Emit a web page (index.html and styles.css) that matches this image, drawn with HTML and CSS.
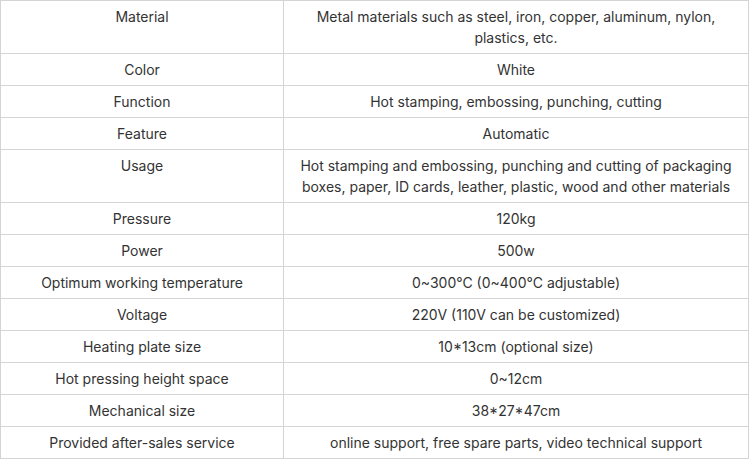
FILE: index.html
```html
<!DOCTYPE html>
<html>
<head>
<meta charset="utf-8">
<link rel="stylesheet" href="styles.css">
</head>
<body>
<table class="spec">
<colgroup><col class="c1"><col class="c2"></colgroup>
<tbody>
<tr><td>Material</td><td>Metal materials such as steel, iron, copper, aluminum, nylon, plastics, etc.</td></tr>
<tr><td>Color</td><td>White</td></tr>
<tr><td>Function</td><td>Hot stamping, embossing, punching, cutting</td></tr>
<tr><td>Feature</td><td>Automatic</td></tr>
<tr><td>Usage</td><td>Hot stamping and embossing, punching and cutting of packaging boxes, paper, ID cards, leather, plastic, wood and other materials</td></tr>
<tr><td>Pressure</td><td>120kg</td></tr>
<tr><td>Power</td><td>500w</td></tr>
<tr><td>Optimum working temperature</td><td>0~300°C (0~400°C adjustable)</td></tr>
<tr><td>Voltage</td><td>220V (110V can be customized)</td></tr>
<tr><td>Heating plate size</td><td>10*13cm (optional size)</td></tr>
<tr><td>Hot pressing height space</td><td>0~12cm</td></tr>
<tr><td>Mechanical size</td><td>38*27*47cm</td></tr>
<tr><td>Provided after-sales service</td><td>online support, free spare parts, video technical support</td></tr>
</tbody>
</table>
</body>
</html>
```
FILE: styles.css
```css
html, body {
  margin: 0;
  padding: 0;
  background: #ffffff;
}
.spec {
  border-collapse: collapse;
  table-layout: fixed;
  width: 749px;
  font-family: Inter, "Noto Sans", sans-serif;
  font-size: 14px;
  line-height: 21px;
  color: #333333;
}
.c1 { width: 283px; }
.spec td {
  border: 1px solid #d4d4d4;
  padding: 5px 8px;
  text-align: center;
  vertical-align: top;
}
```
